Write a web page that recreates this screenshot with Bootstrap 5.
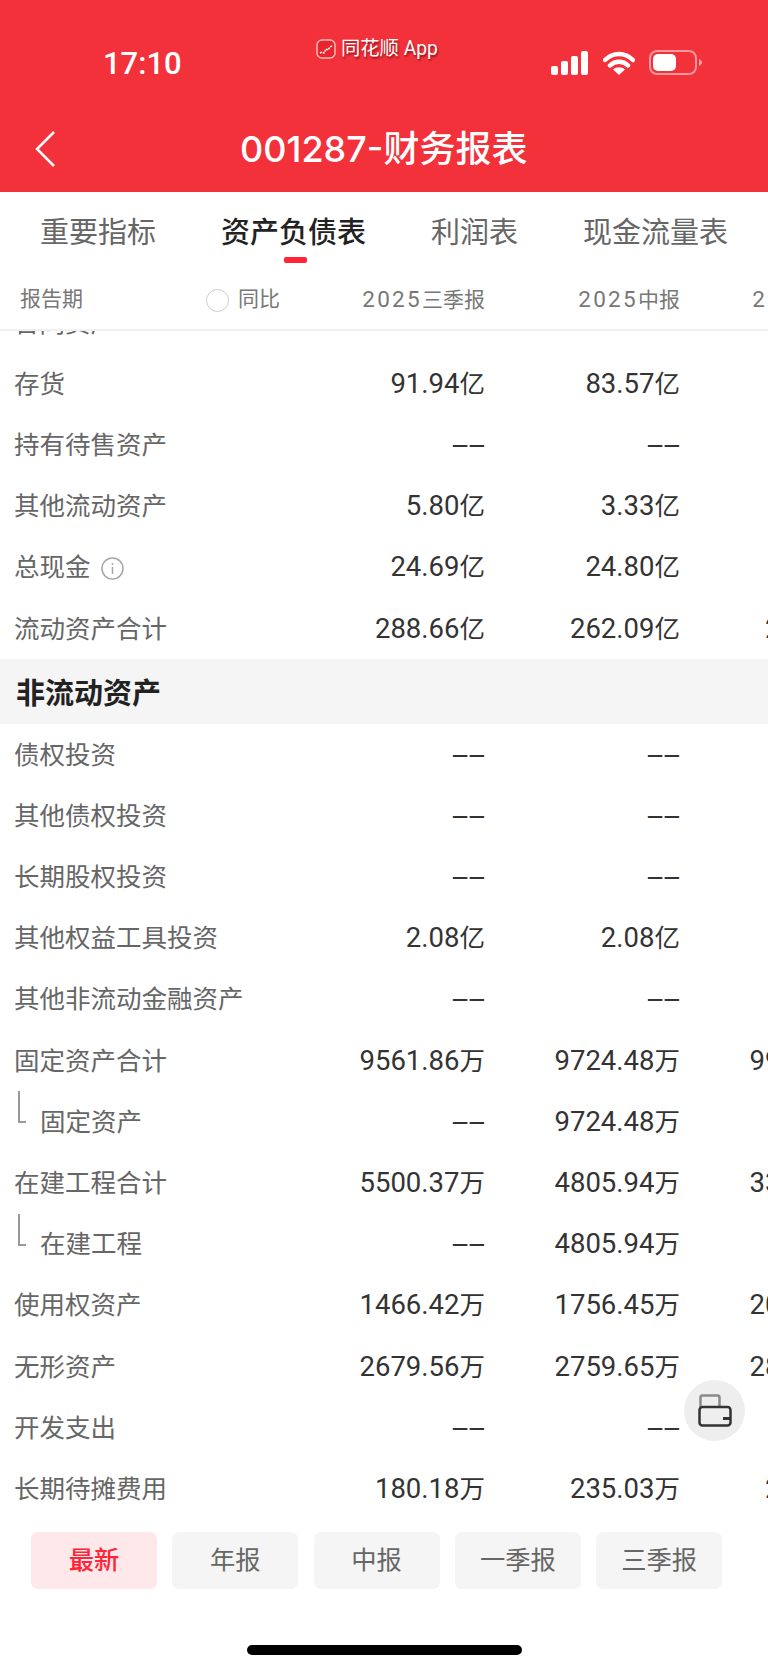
<!DOCTYPE html>
<html lang="zh-CN">
<head>
  <meta charset="UTF-8">
  <title>001287-财务报表</title>
  <meta name="viewport" content="width=device-width, initial-scale=1">
  <link href="https://cdn.jsdelivr.net/npm/bootstrap@5.3.0/dist/css/bootstrap.min.css" rel="stylesheet">
  <style>
    body { width: 768px; height: 1670px; overflow: hidden; background: #fff; font-family: Roboto, "Noto Sans CJK SC", sans-serif; }
    .app-top { height: 192px; background: #f3313b; color: #fff; }
    .status-row { height: 124px; padding: 39px 66px 0 103px; }
    .clock { font-size: 31px; font-weight: 500; line-height: 50px; width: 213px; flex: none; }
    .source-app { font-size: 19.3px; line-height: 22px; height: 22px; margin-top: -1px; text-shadow: 1px 2px 2px rgba(90, 0, 0, .6); width: 232px; flex: none; }
    .source-app svg { margin-right: 5px; }
    .status-icons { margin-top: 11px; gap: 14.5px; margin-left: auto; }
    .title-row { height: 68px; padding: 0 0 18px 35px; }
    .page-title { font-size: 36px; font-weight: 500; margin-left: 185px; line-height: 50px; white-space: nowrap; font-family: Inter, "Noto Sans CJK SC", sans-serif; }
    .tab-row { height: 75px; padding: 18px 0 0 40px; gap: 65px; white-space: nowrap; overflow: hidden; }
    .tab-link { font-size: 29px; line-height: 46px; color: #666; position: relative; }
    .tab-link.on { color: #222; font-weight: 500; }
    .tab-link.on::after { content: ""; position: absolute; left: 63px; top: 47px; width: 23px; height: 6px; border-radius: 2px; background: #ff2436; }
    .head-row { height: 64px; border-bottom: 2px solid #f0f0f0; color: #777; font-size: 21px; white-space: nowrap; overflow: hidden; padding: 4px 0 0; }
    .head-name { margin-left: 20px; width: 186px; flex: none; }
    .yoy-dot { width: 23px; height: 23px; border: 1px solid #ccc; border-radius: 50%; margin-right: 9px; }
    .head-yoy { width: 150px; flex: none; }
    .head-col { width: 195px; flex: none; text-align: right; }
    .head-col.first { width: 129px; }
    .head-yr { font-size: 22.5px; letter-spacing: 2.3px; }
    .sheet-wrap { height: 1188px; overflow: hidden; }
    .sheet { width: 875px; margin: -39px 0 0; table-layout: fixed; --bs-table-bg: transparent; }
    .sheet td { height: 61.2px; padding: 0; vertical-align: middle; font-size: 27.5px; line-height: 34px; color: #333; text-align: right; white-space: nowrap; }
    .sheet td:first-child { color: #666; font-size: 25.5px; text-align: left; padding-left: 14px; }
    .sheet td.sub-name { padding-left: 40px; position: relative; }
    .sub-name::before { content: ""; position: absolute; left: 18px; top: 0; width: 8px; height: 32px; border-left: 2px solid #999; border-bottom: 2px solid #999; }
    .sheet tr.group-row td { height: 65px; background: #f5f5f5; color: #222; font-size: 29px; font-weight: 700; padding: 4px 0 0 16px; }
    .unit { font-size: 25.5px; }
    .no-val { display: inline-block; transform: scaleX(2.2); transform-origin: right center; }
    .info-mark { margin-left: 4px; vertical-align: -4px; }
    .lock-fab { position: absolute; left: 684px; top: 1380px; width: 61px; height: 61px; border-radius: 50%; background: #eee; }
    .range-bar { padding: 13px 0 0 31px; gap: 15.3px; }
    .range-btn { width: 126px; height: 57px; padding: 1px 0 0; border: 0; border-radius: 7px; background: #f5f5f5; color: #666; font-size: 25.3px; line-height: 56px; }
    .range-btn.on { background: #ffe8ea; color: #ff2436; font-weight: 500; }
    .home-bar { position: absolute; left: 247px; top: 1645px; width: 275px; height: 10px; border-radius: 5px; background: #000; }
  </style>
</head>
<body class="position-relative">
  <!-- Red header -->
  <header class="app-top">
    <div class="status-row d-flex align-items-start">
      <div class="clock">17:10</div>
      <div class="source-app d-flex align-items-center">
        <svg width="20" height="20" viewBox="0 0 20 20"><rect x="1" y="1" width="18" height="18" rx="5" fill="#e8242c" stroke="#fbb" stroke-width="1.500"/><path d="M4 14l2-1 2 1 2-4 2 1 2-3 2-1" fill="none" stroke="#fff" stroke-width="1.500" stroke-dasharray="2 1"/></svg>
        <span>同花顺 App</span>
      </div>
      <div class="status-icons d-flex align-items-center">
        <svg width="37" height="24" viewBox="0 0 37 24" fill="#fff"><rect y="15" width="7" height="9" rx="2"/><rect x="10" y="10" width="7" height="14" rx="2"/><rect x="20" y="5" width="7" height="19" rx="2"/><rect x="30" width="7" height="24" rx="2"/></svg>
        <svg width="32" height="24" viewBox="0 0 32 24"><path d="M2 9c8-8 20-8 28 0M7 14.500c5-5 13-5 18 0" fill="none" stroke="#fff" stroke-width="4.500" stroke-linecap="round"/><path d="M16 24l-6-5.500c3.500-3 8.500-3 12 0z" fill="#fff"/></svg>
        <svg width="53" height="25" viewBox="0 0 53 25"><rect x="1" y="1" width="46" height="23" rx="7" fill="none" stroke="#fff" stroke-opacity=".5" stroke-width="2"/><rect x="4" y="4" width="23" height="17" rx="5" fill="#fff"/><path d="M50 9c2 1 3 2 3 3.500s-1 2.500-3 3.500z" fill="#fff" fill-opacity=".5"/></svg>
      </div>
    </div>
    <div class="title-row d-flex align-items-center">
      <svg width="20" height="36" viewBox="0 0 20 36"><path d="M19 1L2 18l17 17" fill="none" stroke="#fff" stroke-width="2.500"/></svg>
      <div class="page-title">001287-财务报表</div>
    </div>
  </header>

  <!-- Tabs -->
  <nav class="tab-row d-flex">
    <a class="tab-link text-decoration-none" href="#">重要指标</a>
    <a class="tab-link on text-decoration-none" href="#">资产负债表</a>
    <a class="tab-link text-decoration-none" href="#">利润表</a>
    <a class="tab-link text-decoration-none" href="#">现金流量表</a>
  </nav>

  <!-- Column heads -->
  <div class="head-row d-flex align-items-center">
    <div class="head-name">报告期</div>
    <div class="head-yoy d-flex align-items-center"><span class="yoy-dot"></span>同比</div>
    <div class="head-col first"><span class="head-yr">2025</span>三季报</div>
    <div class="head-col"><span class="head-yr">2025</span>中报</div>
    <div class="head-col"><span class="head-yr">2025</span>一季报</div>
  </div>

  <!-- Sheet -->
  <div class="sheet-wrap">
    <table class="table table-borderless sheet">
      <colgroup><col style="width:290px"><col style="width:195px"><col style="width:195px"><col style="width:195px"></colgroup>
      <tbody>
        <tr><td>合同资产</td><td><span class="no-val">--</span></td><td><span class="no-val">--</span></td><td><span class="no-val">--</span></td></tr>
        <tr><td>存货</td><td>91.94<span class="unit">亿</span></td><td>83.57<span class="unit">亿</span></td><td>76.12<span class="unit">亿</span></td></tr>
        <tr><td>持有待售资产</td><td><span class="no-val">--</span></td><td><span class="no-val">--</span></td><td><span class="no-val">--</span></td></tr>
        <tr><td>其他流动资产</td><td>5.80<span class="unit">亿</span></td><td>3.33<span class="unit">亿</span></td><td>3.18<span class="unit">亿</span></td></tr>
        <tr><td>总现金 <svg class="info-mark" width="23" height="23" viewBox="0 0 23 23"><circle cx="11.500" cy="11.500" r="10.500" fill="none" stroke="#a6a6a6" stroke-width="1.500"/><path d="M11.500 10v7" stroke="#a6a6a6" stroke-width="1.500"/><circle cx="11.500" cy="7" r="1" fill="#a6a6a6"/></svg></td><td>24.69<span class="unit">亿</span></td><td>24.80<span class="unit">亿</span></td><td>23.41<span class="unit">亿</span></td></tr>
        <tr><td>流动资产合计</td><td>288.66<span class="unit">亿</span></td><td>262.09<span class="unit">亿</span></td><td>241.17<span class="unit">亿</span></td></tr>
        <tr class="group-row"><td colspan="4">非流动资产</td></tr>
        <tr><td>债权投资</td><td><span class="no-val">--</span></td><td><span class="no-val">--</span></td><td><span class="no-val">--</span></td></tr>
        <tr><td>其他债权投资</td><td><span class="no-val">--</span></td><td><span class="no-val">--</span></td><td><span class="no-val">--</span></td></tr>
        <tr><td>长期股权投资</td><td><span class="no-val">--</span></td><td><span class="no-val">--</span></td><td><span class="no-val">--</span></td></tr>
        <tr><td>其他权益工具投资</td><td>2.08<span class="unit">亿</span></td><td>2.08<span class="unit">亿</span></td><td>2.08<span class="unit">亿</span></td></tr>
        <tr><td>其他非流动金融资产</td><td><span class="no-val">--</span></td><td><span class="no-val">--</span></td><td><span class="no-val">--</span></td></tr>
        <tr><td>固定资产合计</td><td>9561.86<span class="unit">万</span></td><td>9724.48<span class="unit">万</span></td><td>9964.12<span class="unit">万</span></td></tr>
        <tr><td class="sub-name">固定资产</td><td><span class="no-val">--</span></td><td>9724.48<span class="unit">万</span></td><td><span class="no-val">--</span></td></tr>
        <tr><td>在建工程合计</td><td>5500.37<span class="unit">万</span></td><td>4805.94<span class="unit">万</span></td><td>3312.70<span class="unit">万</span></td></tr>
        <tr><td class="sub-name">在建工程</td><td><span class="no-val">--</span></td><td>4805.94<span class="unit">万</span></td><td><span class="no-val">--</span></td></tr>
        <tr><td>使用权资产</td><td>1466.42<span class="unit">万</span></td><td>1756.45<span class="unit">万</span></td><td>2043.50<span class="unit">万</span></td></tr>
        <tr><td>无形资产</td><td>2679.56<span class="unit">万</span></td><td>2759.65<span class="unit">万</span></td><td>2841.33<span class="unit">万</span></td></tr>
        <tr><td>开发支出</td><td><span class="no-val">--</span></td><td><span class="no-val">--</span></td><td><span class="no-val">--</span></td></tr>
        <tr><td>长期待摊费用</td><td>180.18<span class="unit">万</span></td><td>235.03<span class="unit">万</span></td><td>298.75<span class="unit">万</span></td></tr>
      </tbody>
    </table>
  </div>

  <!-- Period filter -->
  <div class="range-bar d-flex">
    <button type="button" class="btn range-btn on">最新</button>
    <button type="button" class="btn range-btn">年报</button>
    <button type="button" class="btn range-btn">中报</button>
    <button type="button" class="btn range-btn">一季报</button>
    <button type="button" class="btn range-btn">三季报</button>
  </div>

  <div class="lock-fab d-flex align-items-center justify-content-center">
    <svg width="34" height="33" viewBox="0 0 34 33"><path d="M2.500 13V3.500q0-2 2-2h15q2 0 2 2V13" fill="none" stroke="#8a8a8a" stroke-width="2.500"/><rect x="1.500" y="13" width="31" height="18.500" rx="3" fill="none" stroke="#333" stroke-width="2.500"/><rect x="25" y="23" width="7" height="3" fill="#333"/></svg>
  </div>
  <div class="home-bar"></div>

  <script src="https://cdn.jsdelivr.net/npm/bootstrap@5.3.0/dist/js/bootstrap.bundle.min.js"></script>
</body>
</html>
